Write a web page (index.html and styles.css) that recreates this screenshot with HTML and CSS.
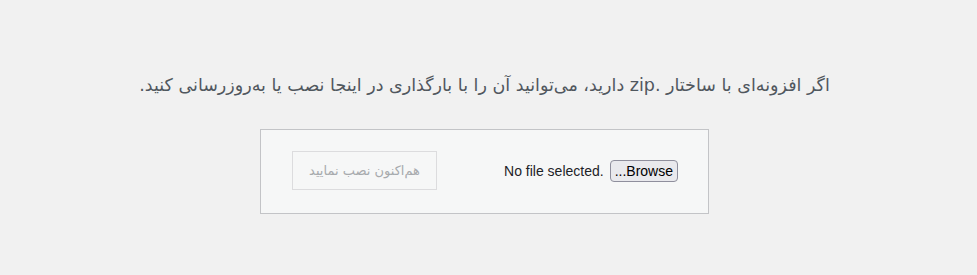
FILE: index.html
```html
<!DOCTYPE html>
<html lang="fa" dir="rtl">
<head>
  <meta charset="UTF-8">
  <title>بارگذاری افزونه</title>
  <link rel="stylesheet" href="styles.css">
</head>
<body>
  <div class="upload-plugin">
    <p class="install-help">اگر افزونه‌ای با ساختار .zip دارید، می‌توانید آن را با بارگذاری در اینجا نصب یا به‌روزرسانی کنید.</p>
    <form class="wp-upload-form">
      <div class="file-field">
        <button type="button" class="browse">Browse...</button>
        <span class="file-status" dir="ltr">No file selected.</span>
      </div>
      <button type="button" class="button" disabled>هم‌اکنون نصب نمایید</button>
    </form>
  </div>
</body>
</html>
```

FILE: styles.css
```css
body {
  margin: 0;
  background-color: #f1f1f1;
  font-family: "DejaVu Sans", "Noto Sans", sans-serif;
  color: #3c434a;
}

.upload-plugin {
  padding-top: 72px;
  padding-right: 8px;
  display: flex;
  flex-direction: column;
  align-items: center;
}

.install-help {
  margin: 0;
  font-size: 17.5px;
  line-height: 26px;
  color: #50575e;
}

.wp-upload-form {
  margin-top: 31px;
  width: 386px;
  padding: 21px 30px 23px 31px;
  border: 1px solid #c3c4c7;
  background-color: #f6f7f7;
  display: flex;
  align-items: center;
  justify-content: space-between;
}

.file-field {
  display: flex;
  align-items: center;
  gap: 6px;
}

.browse {
  font-family: "Liberation Sans", Arial, sans-serif;
  font-size: 14px;
  color: #000;
  background-color: #e9e9ed;
  border: 1px solid #8f8f9d;
  border-radius: 4px;
  height: 22px;
  padding: 0 4px;
  cursor: pointer;
}

.file-status {
  font-family: "Liberation Sans", Arial, sans-serif;
  font-size: 14px;
  color: #1d2327;
}

.button {
  font-family: "DejaVu Sans", "Noto Sans", sans-serif;
  font-size: 13px;
  width: 145px;
  height: 39px;
  color: #a7aaad;
  background-color: #f6f7f7;
  border: 1px solid #dcdcde;
  border-radius: 0;
}
```
